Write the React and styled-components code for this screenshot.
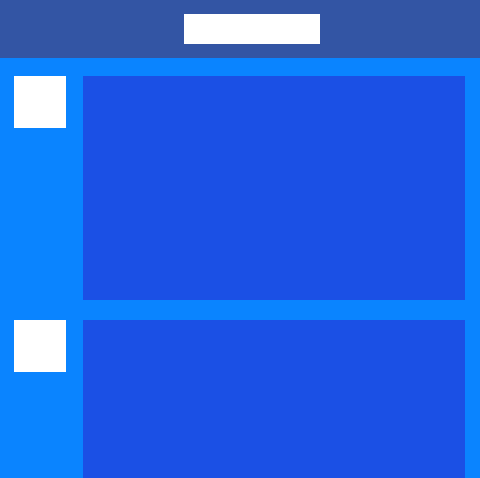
import styled, { createGlobalStyle } from "styled-components";

const GlobalStyle = createGlobalStyle`
  html, body {
    margin: 0;
    padding: 0;
    background: #0a84ff;
    font-family: "Liberation Sans", Arial, sans-serif;
  }
`;

const Page = styled.div`
  width: 480px;
  height: 478px;
  overflow: hidden;
  background: #0a84ff;
  display: flex;
  flex-direction: column;
`;

const Header = styled.header`
  height: 58px;
  flex-shrink: 0;
  background: #3355a4;
  display: flex;
  justify-content: center;
  padding: 14px 0 0 24px;
  box-sizing: border-box;
`;

const Title = styled.div`
  width: 136px;
  height: 30px;
  background: #ffffff;
`;

const List = styled.main`
  display: flex;
  flex-direction: column;
  gap: 20px;
  padding: 18px 15px 0 14px;
`;

const Row = styled.div`
  display: flex;
  align-items: flex-start;
  gap: 17px;
`;

const Thumb = styled.div`
  width: 52px;
  height: 52px;
  flex-shrink: 0;
  background: #ffffff;
`;

const Card = styled.div`
  flex: 1;
  height: 224px;
  background: #1b50e5;
`;

export default function App() {
  return (
    <Page>
      <GlobalStyle />
      <Header>
        <Title />
      </Header>
      <List>
        {[0, 1].map((i) => (
          <Row key={i}>
            <Thumb />
            <Card />
          </Row>
        ))}
      </List>
    </Page>
  );
}
